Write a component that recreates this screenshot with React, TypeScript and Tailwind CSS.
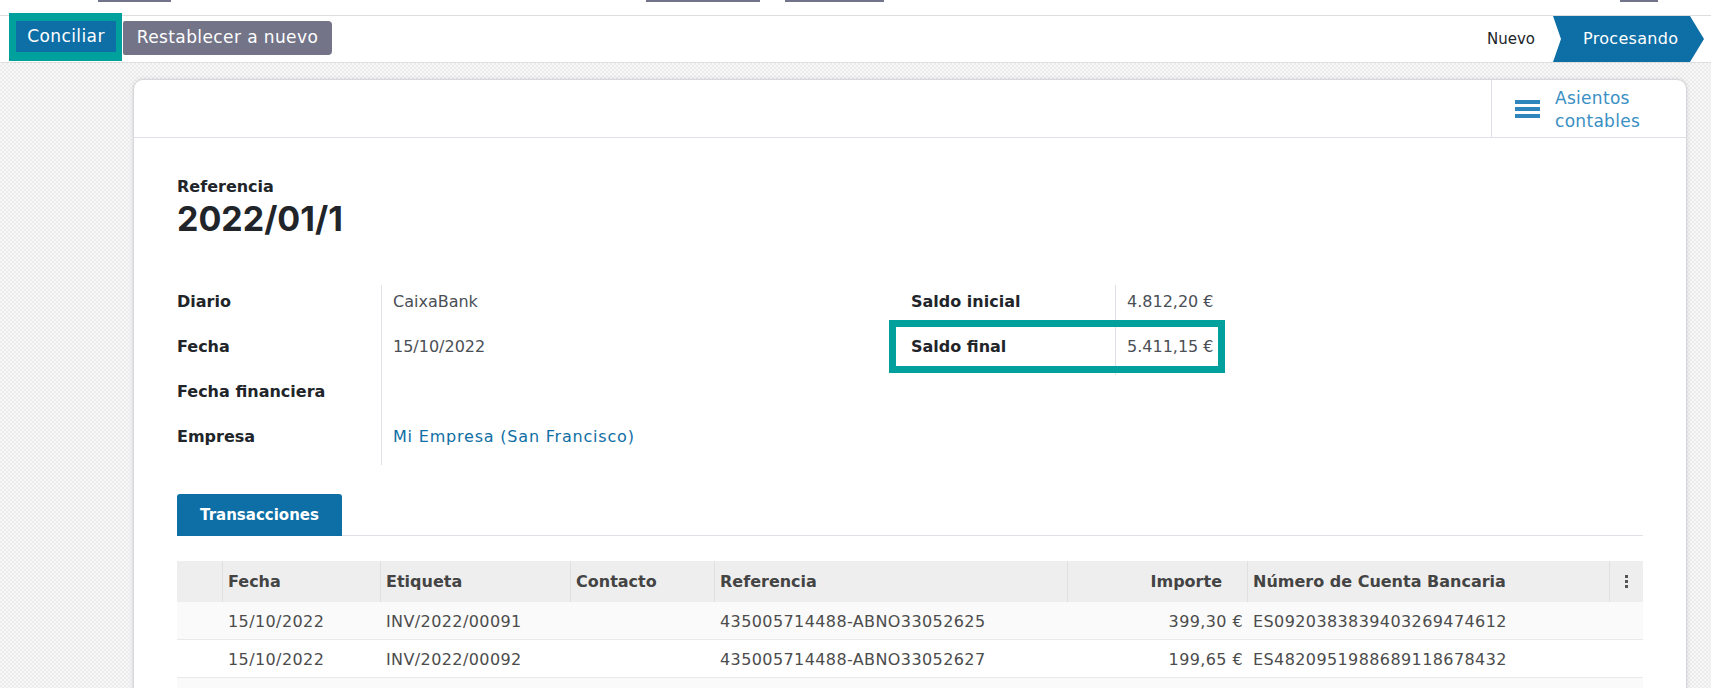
import React from "react";

const font = { fontFamily: "'DejaVu Sans', Inter, sans-serif" };

function Bars() {
  return (
    <svg width="25" height="20" viewBox="0 0 25 20">
      <rect x="0" y="1" width="25" height="4" fill="#2f86bd" />
      <rect x="0" y="8" width="25" height="4" fill="#2f86bd" />
      <rect x="0" y="15" width="25" height="4" fill="#2f86bd" />
    </svg>
  );
}

function Field({ label, value, link }: { label: string; value?: string; link?: boolean }) {
  return (
    <div className="flex h-[45px]">
      <div className="w-[204px] pt-[6px] text-[16px] leading-[22px] font-bold text-[#212529]">{label}</div>
      <div className={"border-l border-[#dee2e6] pl-[11px] pt-[6px] text-[16px] leading-[22px] " + (link ? "text-[#0f6ea5] tracking-[0.8px]" : "text-[#4a4f55]")}>
        {value ?? "\u00a0"}
      </div>
    </div>
  );
}

const rows = [
  ["15/10/2022", "INV/2022/00091", "", "435005714488-ABNO33052625", "399,30 €", "ES0920383839403269474612"],
  ["15/10/2022", "INV/2022/00092", "", "435005714488-ABNO33052627", "199,65 €", "ES4820951988689118678432"],
];

export default function App() {
  return (
    <div style={font} className="w-[1711px] h-[688px] overflow-hidden bg-white text-[#212529]">
      {/* top strip */}
      <div className="h-[16px] border-b border-[#dedede] flex items-start">
        <div className="ml-[98px] w-[73px] h-[2px] bg-[#71748b]" />
        <div className="ml-[475px] w-[114px] h-[2px] bg-[#71748b]" />
        <div className="ml-[25px] w-[99px] h-[2px] bg-[#71748b]" />
        <div className="ml-[736px] w-[38px] h-[2px] bg-[#71748b]" />
      </div>
      {/* control panel */}
      <div className="h-[47px] border-b border-[#dedede] flex items-start justify-between">
        <div className="flex items-start">
          <div className="ml-[9px] -mt-[3px] bg-[#00a09d] pl-[7px] pr-[6px] pt-[8px] pb-[9px]">
            <div className="w-[100px] h-[31px] bg-[#0e6ea6] text-white text-[17px] tracking-[0.4px] flex items-center justify-center">Conciliar</div>
          </div>
          <div className="ml-[1px] mt-[5px] w-[209px] h-[34px] rounded-r-[4px] rounded-l-[2px] bg-[#737488] text-white text-[17px] tracking-[0.4px] flex items-center justify-center">
            Restablecer a nuevo
          </div>
        </div>
        <div className="flex items-stretch h-[46px] mr-[7px]">
          <div className="flex items-center pr-[18px] text-[15px] text-[#212529]">Nuevo</div>
          <div className="w-[151px] bg-[#0e6ea6] text-white text-[16px] tracking-[0.3px] flex items-center pl-[30px] [clip-path:polygon(0_0,calc(100%-14px)_0,100%_50%,calc(100%-14px)_100%,0_100%,8px_50%)]">
            Procesando
          </div>
        </div>
      </div>
      {/* sheet area */}
      <div className="h-[700px] pt-[16px] pl-[133px] pr-[24px] [background-image:repeating-conic-gradient(#ececec_0%_25%,#f7f7f7_0%_50%)] [background-size:4px_4px]">
        <div className="h-[700px] bg-white border border-[#d6d7dc] rounded-t-[10px] shadow-[0_0_4px_rgba(0,0,0,0.12)]">
          {/* header */}
          <div className="h-[58px] border-b border-[#dee2e6] flex justify-end">
            <div className="w-[195px] border-l border-[#dee2e6] flex items-center pl-[23px] gap-[15px]">
              <Bars />
              <div className="pt-[2px] text-[17px] tracking-[0.3px] leading-[23px] text-[#3a8fc4]">
                <div>Asientos</div>
                <div>contables</div>
              </div>
            </div>
          </div>
          {/* body */}
          <div className="px-[43px] pt-[39px]">
            <div className="text-[16px] font-bold leading-[20px]">Referencia</div>
            <div style={{ fontFamily: "Inter, sans-serif" }} className="text-[34px] font-bold leading-[44px] text-[#212529]">2022/01/1</div>
            <div className="mt-[44px] grid grid-cols-2">
              <div>
                <Field label="Diario" value="CaixaBank" />
                <Field label="Fecha" value="15/10/2022" />
                <Field label="Fecha financiera" />
                <Field label="Empresa" value="Mi Empresa (San Francisco)" link />
              </div>
              <div className="pl-[1px]">
                <Field label="Saldo inicial" value="4.812,20 €" />
                <div className="relative">
                  <Field label="Saldo final" value="5.411,15 €" />
                  <div className="absolute -left-[22px] -top-[10px] w-[336px] h-[53px] border-[7px] border-[#00a09d]" />
                </div>
              </div>
            </div>
            {/* tabs */}
            <div className="mt-[29px] flex items-end border-b border-[#dee2e6]">
              <div className="w-[165px] h-[42px] rounded-t-[3px] bg-[#0e6ea6] text-white text-[15px] font-bold flex items-center justify-center -mb-px">
                Transacciones
              </div>
            </div>
            {/* table */}
            <div className="mt-[25px] text-[16px]">
              <div className="flex h-[41px] bg-[#eeeeee] font-bold text-[16px] text-[#444]">
                <div className="w-[46px] border-r border-[#e0e0e0]" />
                <div className="w-[158px] border-r border-[#e0e0e0] px-[5px] flex items-center">Fecha</div>
                <div className="w-[190px] border-r border-[#e0e0e0] px-[5px] flex items-center">Etiqueta</div>
                <div className="w-[144px] border-r border-[#e0e0e0] px-[5px] flex items-center">Contacto</div>
                <div className="w-[353px] border-r border-[#e0e0e0] px-[5px] flex items-center">Referencia</div>
                <div className="w-[180px] border-r border-[#e0e0e0] pl-[5px] pr-[25px] flex items-center justify-end">Importe</div>
                <div className="w-[362px] border-r border-[#e0e0e0] px-[5px] flex items-center">Número de Cuenta Bancaria</div>
                <div className="flex-1 flex items-center justify-center">
                  <div className="flex flex-col gap-[2px]">
                    <div className="w-[3px] h-[3px] bg-[#555]" />
                    <div className="w-[3px] h-[3px] bg-[#555]" />
                    <div className="w-[3px] h-[3px] bg-[#555]" />
                  </div>
                </div>
              </div>
              {rows.map((r, i) => (
                <div key={i} className={"flex h-[38px] pt-[3px] border-b border-[#e7e9ed] text-[#4c4c4c] tracking-[0.4px] " + (i === 0 ? "bg-[#fafafa]" : "bg-white")}>
                  <div className="w-[46px]" />
                  <div className="w-[158px] px-[5px] flex items-center">{r[0]}</div>
                  <div className="w-[190px] px-[5px] flex items-center">{r[1]}</div>
                  <div className="w-[144px] px-[5px] flex items-center">{r[2]}</div>
                  <div className="w-[353px] px-[5px] flex items-center">{r[3]}</div>
                  <div className="w-[180px] px-[5px] flex items-center justify-end">{r[4]}</div>
                  <div className="w-[362px] px-[5px] flex items-center">{r[5]}</div>
                  <div className="flex-1" />
                </div>
              ))}
              <div className="h-[38px] bg-[#fafafa]" />
            </div>
          </div>
        </div>
      </div>
    </div>
  );
}
